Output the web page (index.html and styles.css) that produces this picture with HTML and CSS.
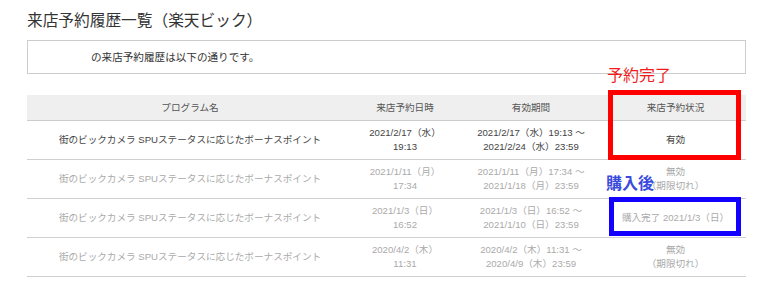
FILE: index.html
```html
<!DOCTYPE html>
<html lang="ja">
<head>
<meta charset="utf-8">
<link rel="stylesheet" href="styles.css">
</head>
<body>
<div class="page">
  <h1 class="title">来店予約履歴一覧（楽天ビック）</h1>
  <div class="notice">の来店予約履歴は以下の通りです。</div>
  <table class="history">
    <colgroup>
      <col class="c1"><col class="c2"><col class="c3"><col class="c4">
    </colgroup>
    <thead>
      <tr><th>プログラム名</th><th>来店予約日時</th><th>有効期間</th><th>来店予約状況</th></tr>
    </thead>
    <tbody>
      <tr class="active">
        <td>街のビックカメラ SPUステータスに応じたボーナスポイント</td>
        <td>2021/2/17（水）<br>19:13</td>
        <td>2021/2/17（水）19:13 ～<br>2021/2/24（水）23:59</td>
        <td>有効</td>
      </tr>
      <tr class="inactive">
        <td>街のビックカメラ SPUステータスに応じたボーナスポイント</td>
        <td>2021/1/11（月）<br>17:34</td>
        <td>2021/1/11（月）17:34 ～<br>2021/1/18（月）23:59</td>
        <td>無効<br>（期限切れ）</td>
      </tr>
      <tr class="inactive">
        <td>街のビックカメラ SPUステータスに応じたボーナスポイント</td>
        <td>2021/1/3（日）<br>16:52</td>
        <td>2021/1/3（日）16:52 ～<br>2021/1/10（日）23:59</td>
        <td>購入完了 2021/1/3（日）</td>
      </tr>
      <tr class="inactive">
        <td>街のビックカメラ SPUステータスに応じたボーナスポイント</td>
        <td>2020/4/2（木）<br>11:31</td>
        <td>2020/4/2（木）11:31 ～<br>2020/4/9（木）23:59</td>
        <td>無効<br>（期限切れ）</td>
      </tr>
    </tbody>
  </table>
  <div class="note note-red">予約完了</div>
  <div class="frame frame-red"></div>
  <div class="note note-blue">購入後</div>
  <div class="frame frame-blue"></div>
</div>
</body>
</html>
```
FILE: styles.css
```css
html, body {
  margin: 0;
  padding: 0;
  background: #fff;
}
body {
  font-family: "Liberation Sans", "Noto Sans CJK JP", sans-serif;
  color: #333;
}
.page {
  position: relative;
  padding: 8px 0 0 27px;
  width: 719px;
}
.title {
  margin: 0;
  font-family: "Noto Sans CJK JP", sans-serif;
  font-size: 15.7px;
  font-weight: normal;
  line-height: 24px;
  color: #333;
}
.notice {
  margin-top: 8px;
  height: 32px;
  border: 1px solid #ccc;
  box-sizing: content-box;
  padding-left: 63px;
  font-size: 10.6px;
  line-height: 32px;
  color: #333;
}
.history {
  margin-top: 21px;
  width: 719px;
  border-collapse: collapse;
  table-layout: fixed;
  font-size: 9.6px;
}
.c1 { width: 326px; }
.c2 { width: 104px; }
.c3 { width: 148px; }
.c4 { width: 141px; }
.history th {
  background: #efefef;
  font-weight: normal;
  color: #555;
  height: 25px;
  padding: 0;
  border-bottom: 1px solid #ccc;
  text-align: center;
  line-height: 14px;
}
.history td {
  height: 38px;
  padding: 0;
  border-bottom: 1px solid #d0d0d0;
  text-align: center;
  line-height: 14px;
  white-space: nowrap;
}
.active td { color: #444; }
.inactive td { color: #aaa; }
.note {
  position: absolute;
  font-family: "Noto Sans CJK JP", sans-serif;
  font-size: 16px;
  line-height: 18px;
}
.note-red {
  left: 607px;
  top: 65px;
  color: #f21b1b;
}
.note-blue {
  left: 606px;
  top: 173px;
  color: #3a4bdc;
  font-weight: bold;
}
.frame {
  position: absolute;
  box-sizing: border-box;
  border: 5px solid;
}
.frame-red {
  left: 608px;
  top: 90px;
  width: 133px;
  height: 70px;
  border-color: #ff0000;
}
.frame-blue {
  left: 609px;
  top: 197px;
  width: 132px;
  height: 39px;
  border-color: #1400ff;
}
```
